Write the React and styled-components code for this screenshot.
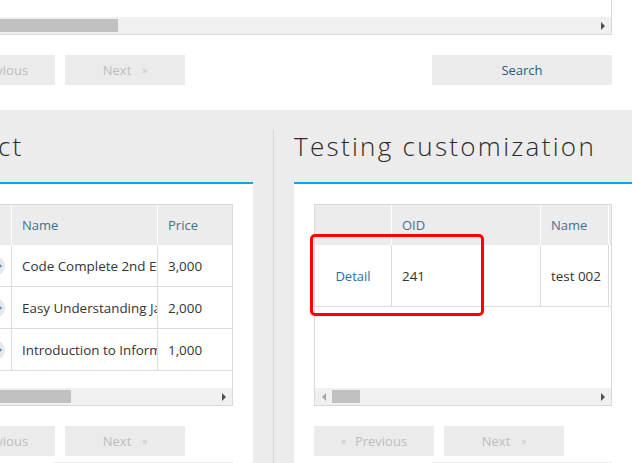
import React from 'react'
import styled, { createGlobalStyle } from 'styled-components'

const GlobalStyle = createGlobalStyle`
  html, body {
    margin: 0;
    padding: 0;
    background: #fff;
    overflow: hidden;
  }
  body {
    font-family: "Open Sans", "Noto Sans", "Liberation Sans", sans-serif;
    font-size: 13px;
    color: #333;
  }
`

const Page = styled.div`
  width: 717px;
  margin-left: -85px;
  height: 463px;
  display: flex;
  flex-direction: column;
  overflow: hidden;
`

const TopSection = styled.div`
  flex-shrink: 0;
  height: 110px;
  padding: 0 20px;
  box-sizing: border-box;
  background: #fff;
`

const GridBox = styled.div`
  height: ${p => p.$height}px;
  margin-top: ${p => p.$offset || 0}px;
  border: 1px solid #d9d9d9;
  box-sizing: border-box;
  display: flex;
  flex-direction: column;
  background: #fff;
`

const GridBody = styled.div`
  flex: 1;
  overflow: hidden;
`

const Track = styled.div`
  height: 17px;
  flex-shrink: 0;
  background: #f0f0f0;
  display: flex;
  align-items: center;
`

const ArrowBtn = styled.div`
  width: 17px;
  height: 17px;
  display: flex;
  align-items: center;
  justify-content: center;
  &::before {
    content: '';
    width: 0;
    height: 0;
    border-top: 4px solid transparent;
    border-bottom: 4px solid transparent;
    ${p => p.$dir === 'left'
      ? `border-right: 4px solid ${p.$color};`
      : `border-left: 4px solid ${p.$color};`}
  }
`

const ThumbArea = styled.div`
  flex: 1;
  height: 100%;
  display: flex;
  align-items: center;
`

const Thumb = styled.div`
  height: 13px;
  background: #c1c1c1;
  flex-shrink: 0;
`

const ButtonRow = styled.div`
  display: flex;
  gap: 10px;
  margin-top: ${p => p.$top}px;
  justify-content: ${p => p.$end ? 'flex-end' : 'flex-start'};
`

const Button = styled.div`
  width: ${p => p.$width || 120}px;
  height: 30px;
  flex-shrink: 0;
  background: #ebebeb;
  color: ${p => p.$active ? '#245b85' : '#bdbdbd'};
  display: flex;
  align-items: center;
  justify-content: center;
  font-size: 13px;
`

const Chevron = styled.span`
  font-size: 10px;
  color: #c6c6c6;
  margin: ${p => p.$before ? '0 9px 0 0' : '0 0 0 11px'};
`

const Spacer = styled.div`
  margin-left: auto;
`

const Bottom = styled.div`
  flex: 1;
  min-height: 0;
  overflow: hidden;
  background: #ececec;
  display: grid;
  grid-template-columns: 338px 1px 338px;
  column-gap: 20px;
  padding-top: 20px;
`

const Divider = styled.div`
  background: #d6d6d6;
`

const Panel = styled.div`
  display: flex;
  flex-direction: column;
`

const Title = styled.h2`
  margin: 0;
  height: 54px;
  flex-shrink: 0;
  box-sizing: border-box;
  border-bottom: 2px solid #12a2e6;
  font-size: 26px;
  line-height: 32px;
  font-weight: 300;
  letter-spacing: 2.3px;
  color: #2b2b2b;
  white-space: nowrap;
`

const PanelBody = styled.div`
  position: relative;
  flex: 1;
  background: #fff;
  padding: 20px;
`

const Table = styled.table`
  table-layout: fixed;
  border-collapse: separate;
  border-spacing: 0;
  width: ${p => p.$width}px;
`

const Th = styled.th`
  height: 40px;
  padding: 0 10px;
  background: #ececec;
  border-right: 1px solid #fff;
  text-align: left;
  font-weight: normal;
  color: #44708f;
  white-space: nowrap;
  overflow: hidden;
`

const Td = styled.td`
  box-sizing: border-box;
  height: ${p => p.$height}px;
  padding: 0 10px;
  border-right: 1px solid #dcdcdc;
  border-bottom: 1px solid #dcdcdc;
  text-align: ${p => p.$align || 'left'};
  white-space: nowrap;
  overflow: hidden;
  color: #333;
  font-size: 13.4px;
`

const IconCell = styled(Td)`
  text-align: right;
  padding: 0 6px 0 0;
`

const DetailIcon = styled.span`
  display: inline-block;
  vertical-align: middle;
  width: 20px;
  height: 20px;
  border-radius: 50%;
  background: #e8e8e8;
  position: relative;
  &::after {
    content: '';
    position: absolute;
    right: 4px;
    top: 8px;
    width: 3px;
    height: 3px;
    border-top: 1px solid #3b86c0;
    border-right: 1px solid #3b86c0;
    transform: rotate(45deg);
  }
`

const DetailLink = styled.span`
  color: #1f72a6;
  font-size: 13px;
`

const Annotation = styled.div`
  position: absolute;
  left: 16px;
  top: 50px;
  width: 174px;
  height: 82px;
  box-sizing: border-box;
  border: 3px solid #ff0000;
  border-radius: 5px;
`

const ScrollBar = ({ offset, width, leftColor = '#a6a6a6' }) => (
  <Track>
    <ArrowBtn $dir="left" $color={leftColor} />
    <ThumbArea>
      <Thumb style={{ marginLeft: offset, width }} />
    </ThumbArea>
    <ArrowBtn $dir="right" $color="#505050" />
  </Track>
)

const PrevButton = () => (
  <Button><Chevron $before>«</Chevron>Previous</Button>
)

const NextButton = () => (
  <Button>Next<Chevron>»</Chevron></Button>
)

const Pager = ({ top }) => (
  <ButtonRow $top={top}>
    <PrevButton />
    <NextButton />
  </ButtonRow>
)

const books = [
  ['Code Complete 2nd Edition', '3,000'],
  ['Easy Understanding Java', '2,000'],
  ['Introduction to Information Systems', '1,000'],
]

export default function App() {
  return (
    <>
      <GlobalStyle />
      <Page>
        <TopSection>
          <GridBox $height={135} $offset={-100}>
            <GridBody />
            <ScrollBar offset={20} width={145} />
          </GridBox>
          <ButtonRow $top={20}>
            <PrevButton />
            <NextButton />
            <Spacer />
            <Button $width={180} $active>Search</Button>
          </ButtonRow>
        </TopSection>

        <Bottom>
          <Panel>
            <Title>Product</Title>
            <PanelBody>
              <GridBox $height={202}>
                <GridBody>
                  <Table $width={440}>
                    <colgroup>
                      <col style={{ width: 76 }} />
                      <col style={{ width: 146 }} />
                      <col style={{ width: 110 }} />
                      <col style={{ width: 108 }} />
                    </colgroup>
                    <thead>
                      <tr>
                        <Th />
                        <Th>Name</Th>
                        <Th>Price</Th>
                        <Th>Author</Th>
                      </tr>
                    </thead>
                    <tbody>
                      {books.map(([name, price]) => (
                        <tr key={name}>
                          <IconCell $height={42}><DetailIcon /></IconCell>
                          <Td $height={42}>{name}</Td>
                          <Td $height={42}>{price}</Td>
                          <Td $height={42} />
                        </tr>
                      ))}
                    </tbody>
                  </Table>
                </GridBody>
                <ScrollBar offset={30} width={88} />
              </GridBox>
              <Pager top={20} />
              <ButtonRow $top={6} $end>
                <Button $width={180} $active>Search</Button>
              </ButtonRow>
            </PanelBody>
          </Panel>

          <Divider />

          <Panel>
            <Title>Testing customization</Title>
            <PanelBody>
              <GridBox $height={202}>
                <GridBody>
                  <Table $width={394}>
                    <colgroup>
                      <col style={{ width: 77 }} />
                      <col style={{ width: 149 }} />
                      <col style={{ width: 68 }} />
                      <col style={{ width: 100 }} />
                    </colgroup>
                    <thead>
                      <tr>
                        <Th />
                        <Th>OID</Th>
                        <Th>Name</Th>
                        <Th>Note</Th>
                      </tr>
                    </thead>
                    <tbody>
                      <tr>
                        <Td $height={62} $align="center"><DetailLink>Detail</DetailLink></Td>
                        <Td $height={62}>241</Td>
                        <Td $height={62}>test 002</Td>
                        <Td $height={62} />
                      </tr>
                    </tbody>
                  </Table>
                </GridBody>
                <ScrollBar offset={0} width={28} leftColor="#a6a6a6" />
              </GridBox>
              <Pager top={20} />
              <ButtonRow $top={6} $end>
                <Button $width={180} $active>Search</Button>
              </ButtonRow>
              <Annotation />
            </PanelBody>
          </Panel>
        </Bottom>
      </Page>
    </>
  )
}
